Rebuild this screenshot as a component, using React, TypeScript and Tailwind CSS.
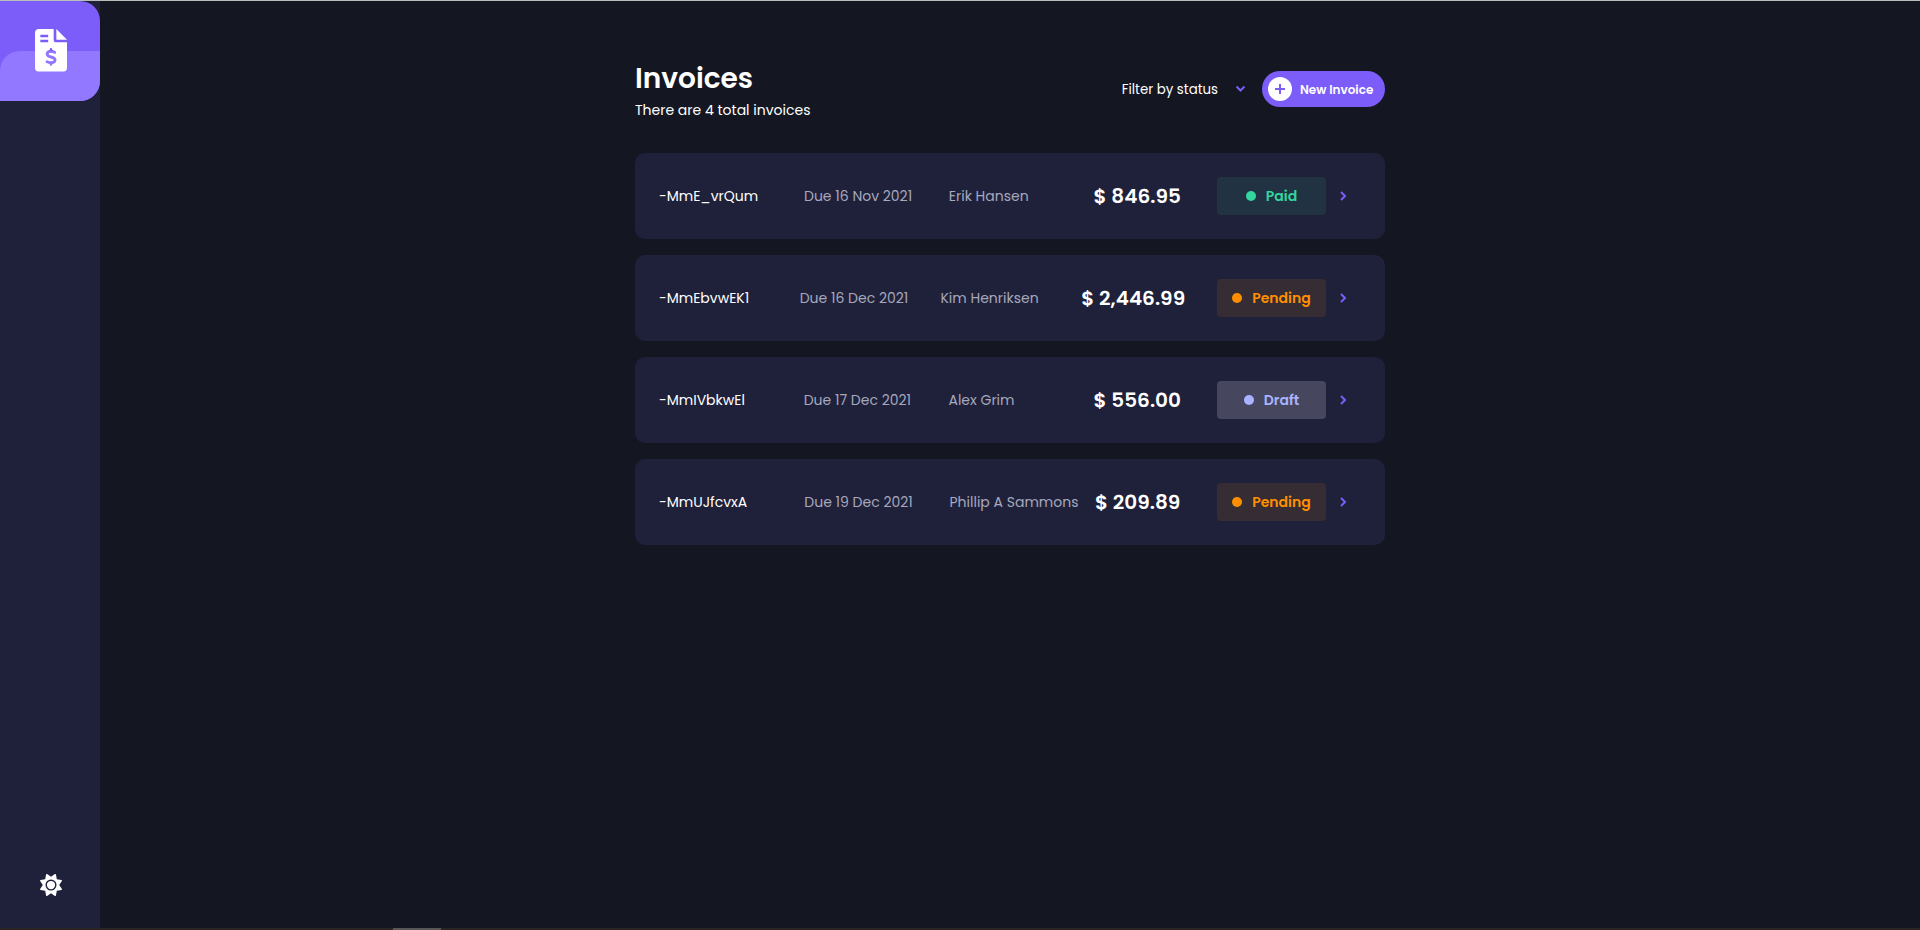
import { FaSun } from "react-icons/fa6";

type Status = "Paid" | "Pending" | "Draft";

interface Invoice {
  id: string;
  due: string;
  client: string;
  amount: string;
  status: Status;
  columns: string;
}

const invoices: Invoice[] = [
  { id: "-MmE_vrQum", due: "Due 16 Nov 2021", client: "Erik Hansen", amount: "$ 846.95", status: "Paid", columns: "grid-cols-[145px_144.8px_144.7px_123.5px_109px_1fr]" },
  { id: "-MmEbvwEK1", due: "Due 16 Dec 2021", client: "Kim Henriksen", amount: "$ 2,446.99", status: "Pending", columns: "grid-cols-[140.7px_140.8px_140.8px_135.7px_109px_1fr]" },
  { id: "-MmIVbkwEl", due: "Due 17 Dec 2021", client: "Alex Grim", amount: "$ 556.00", status: "Draft", columns: "grid-cols-[144.7px_144.8px_145px_123.5px_109px_1fr]" },
  { id: "-MmUJfcvxA", due: "Due 19 Dec 2021", client: "Phillip A Sammons", amount: "$ 209.89", status: "Pending", columns: "grid-cols-[145.3px_145.2px_145.5px_122px_109px_1fr]" },
];

const badgeStyles: Record<Status, string> = {
  Paid: "bg-[#213343] text-[#33d69f]",
  Pending: "bg-[#362c34] text-[#ff8f00]",
  Draft: "bg-[#46475f] text-[#a9b3ff]",
};

function Chevron({ className }: { className: string }) {
  return (
    <svg viewBox="0 0 7 10" className={className} fill="none" stroke="#7c5dfa" strokeWidth="2">
      <path d="M1 1l4 4-4 4" />
    </svg>
  );
}

function InvoiceLogo() {
  return (
    <svg viewBox="0 0 384 512" className="h-[42.7px] w-8">
      <mask id="logo-cutouts">
        <rect width="384" height="512" fill="white" />
        <g fill="none" stroke="black" strokeLinecap="round">
          <path d="M64 84h94M64 144h94" strokeWidth="28" strokeLinecap="butt" />
          <path d="M192 242v24M192 404v22" strokeWidth="30" />
          <path d="M236 279c-16-8-30-11-44-11-28 0-46 12-46 31 0 50 94 24 94 74 0 21-20 32-47 32-20 0-34-5-48-12" strokeWidth="35" />
        </g>
      </mask>
      <path
        mask="url(#logo-cutouts)"
        fill="white"
        d="M48 0H224V128a32 32 0 0 0 32 32H384V464a48 48 0 0 1-48 48H48a48 48 0 0 1-48-48V48A48 48 0 0 1 48 0zM256 0V128H384z"
      />
    </svg>
  );
}

function Sidebar() {
  return (
    <aside className="flex w-[100px] shrink-0 flex-col items-center justify-between bg-[#1f213a] pb-8">
      <div className="grid h-[100px] w-full grid-rows-2 overflow-hidden rounded-r-[20px] bg-[#7c5dfa]">
        <div className="col-start-1 row-start-2 rounded-tl-[20px] bg-[#9277ff]" />
        <div className="z-10 col-start-1 row-span-2 row-start-1 flex items-center justify-center pb-px pl-[2px]">
          <InvoiceLogo />
        </div>
      </div>
      <FaSun className="ml-px size-[22px] text-white" />
    </aside>
  );
}

function InvoiceRow({ invoice }: { invoice: Invoice }) {
  return (
    <li className={`grid h-[86px] items-center rounded-[10px] bg-[#1f213a] pl-6 text-sm ${invoice.columns}`}>
      <span className="whitespace-nowrap text-white">{invoice.id}</span>
      <span className="whitespace-nowrap text-[#a6a8bd]">{invoice.due}</span>
      <span className="whitespace-nowrap text-[#a6a8bd]">{invoice.client}</span>
      <span className="whitespace-nowrap text-xl font-semibold text-white">{invoice.amount}</span>
      <span className={`flex h-[38px] items-center justify-center gap-[10px] rounded font-semibold ${badgeStyles[invoice.status]}`}>
        <span className="size-[10px] rounded-full bg-current" />
        {invoice.status}
      </span>
      <Chevron className="ml-[14px] h-[10px] w-[7px]" />
    </li>
  );
}

export default function App() {
  return (
    <div className="flex h-[930px] flex-col bg-[#141722] font-['Poppins','Inter',sans-serif] text-white">
      <div className="h-px shrink-0 bg-[#b9beba]" />
      <div className="flex flex-1">
        <Sidebar />
        <main className="flex flex-1 justify-center">
          <div className="w-[750px] pt-[57px]">
            <header className="flex h-[95px] justify-between">
              <div>
                <h1 className="text-[28px] leading-[42px] font-semibold">Invoices</h1>
                <p className="text-sm leading-[21px]">There are 4 total invoices</p>
              </div>
              <div className="mt-[13px] flex h-9 items-center">
                <span className="pt-px text-[13.333px]">Filter by status</span>
                <Chevron className="mr-[18px] ml-[19px] h-[10px] w-[7px] rotate-90" />
                <button className="flex h-9 w-[123px] items-center gap-2 rounded-full bg-[#7c5dfa] pl-[6px] text-xs font-semibold whitespace-nowrap">
                  <span className="flex size-6 items-center justify-center rounded-full bg-white">
                    <svg viewBox="0 0 10 10" className="size-[10px]" stroke="#7c5dfa" strokeWidth="2">
                      <path d="M5 0v10M0 5h10" />
                    </svg>
                  </span>
                  <span className="pt-[2px]">New Invoice</span>
                </button>
              </div>
            </header>
            <ul className="flex flex-col gap-4">
              {invoices.map((invoice) => (
                <InvoiceRow key={invoice.id} invoice={invoice} />
              ))}
            </ul>
          </div>
        </main>
      </div>
      <div className="flex h-[2px] shrink-0 bg-[#2a2424]">
        <div className="ml-[393px] w-12 bg-[#575757]" />
      </div>
    </div>
  );
}
